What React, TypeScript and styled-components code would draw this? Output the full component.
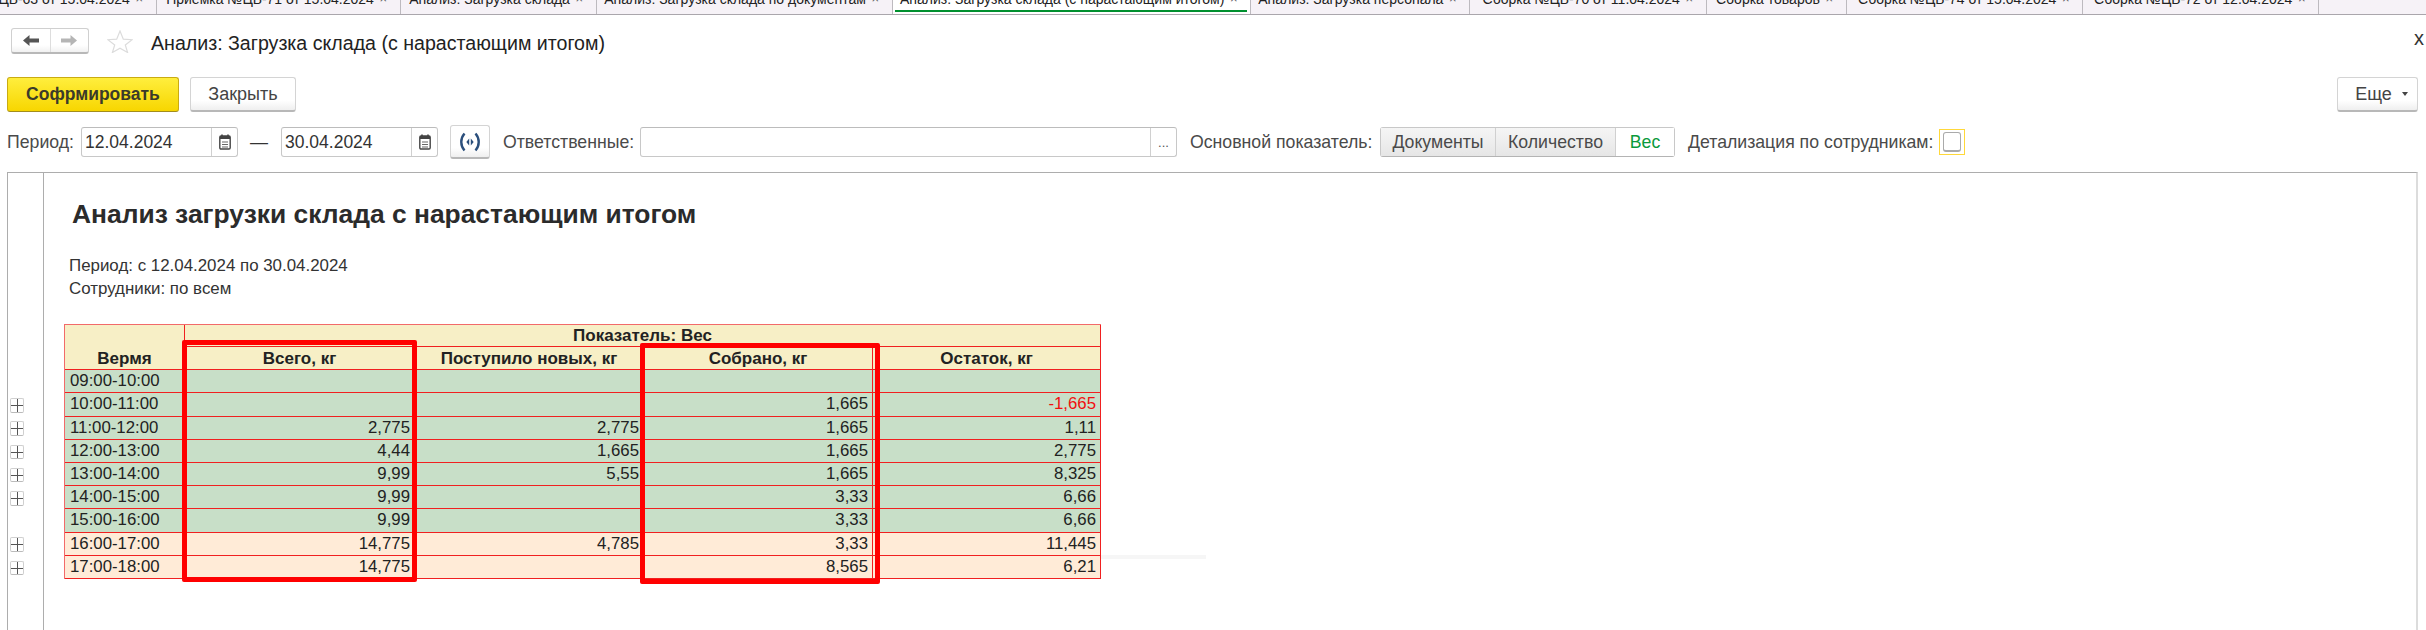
import React from "react";
import styled, { createGlobalStyle } from "styled-components";

const tabs = [
  { label: "Приемка №ЦБ-63 от 15.04.2024", width: 156.5 },
  { label: "Приемка №ЦБ-71 от 15.04.2024", width: 244 },
  { label: "Анализ: Загрузка склада", width: 196 },
  { label: "Анализ: Загрузка склада по документам", width: 296 },
  { label: "Анализ: Загрузка склада (с нарастающим итогом)", width: 358.5, active: true },
  { label: "Анализ: Загрузка персонала", width: 219 },
  { label: "Сборка №ЦБ-70 от 11.04.2024", width: 236.5 },
  { label: "Сборка товаров", width: 140 },
  { label: "Сборка №ЦБ-74 от 15.04.2024", width: 236.5 },
  { label: "Сборка №ЦБ-72 от 12.04.2024", width: 236 },
];

const rows = [
  { time: "09:00-10:00", total: "", added: "", picked: "", rest: "" },
  { time: "10:00-11:00", total: "", added: "", picked: "1,665", rest: "-1,665", negative: true, expand: true },
  { time: "11:00-12:00", total: "2,775", added: "2,775", picked: "1,665", rest: "1,11", expand: true },
  { time: "12:00-13:00", total: "4,44", added: "1,665", picked: "1,665", rest: "2,775", expand: true },
  { time: "13:00-14:00", total: "9,99", added: "5,55", picked: "1,665", rest: "8,325", expand: true },
  { time: "14:00-15:00", total: "9,99", added: "", picked: "3,33", rest: "6,66", expand: true },
  { time: "15:00-16:00", total: "9,99", added: "", picked: "3,33", rest: "6,66" },
  { time: "16:00-17:00", total: "14,775", added: "4,785", picked: "3,33", rest: "11,445", peach: true, expand: true },
  { time: "17:00-18:00", total: "14,775", added: "", picked: "8,565", rest: "6,21", peach: true, expand: true },
];

const CalendarIcon = () => (
  <svg width="12" height="16" viewBox="0 0 12 16">
    <path d="M3 0.5v2.5M9 0.5v2.5" stroke="#444" strokeWidth="1.6" />
    <rect x="0.8" y="2" width="10.4" height="13" rx="1.2" fill="none" stroke="#444" strokeWidth="1.4" />
    <rect x="1" y="2" width="10" height="3" fill="#444" />
    <path d="M3 8h6M3 10.5h6M3 13h6" stroke="#666" strokeWidth="1.1" />
  </svg>
);

const ArrowIcon = ({ flip, color }: { flip?: boolean; color: string }) => (
  <svg width="16" height="11" viewBox="0 0 16 11" style={flip ? { transform: "scaleX(-1)" } : undefined}>
    <path d="M0 5.5 6.5 0v3.5H16v4H6.5V11z" fill={color} />
  </svg>
);

const StarIcon = () => (
  <svg width="26" height="23" viewBox="0 0 26 23">
    <path d="M13 1l3.3 8.2 8.9.5-6.9 5.3 2.3 7.5L13 18.2l-7.6 4.3 2.3-7.5L.8 9.7l8.9-.5z" fill="#fff" stroke="#dcdcdc" strokeWidth="1.2" />
  </svg>
);

const SignalIcon = () => (
  <svg width="24" height="20" viewBox="0 0 24 20">
    <path d="M6.5 1.5C2.2 6.5 2.2 13.5 6.5 18.5M17.5 1.5C21.8 6.5 21.8 13.5 17.5 18.5" fill="none" stroke="#2b4f7c" strokeWidth="2.4" />
    <path d="M11.2 6.5v7L8.3 10zM12.8 6.5v7L15.7 10z" fill="#2b4f7c" />
  </svg>
);

export default function App() {
  return (
    <Page>
      <GlobalStyle />
      <TabBar>
        {tabs.map((tab) => (
          <Tab key={tab.label} $width={tab.width} $active={tab.active}>
            <TabLabel>{tab.label}</TabLabel>
            <TabClose>×</TabClose>
          </Tab>
        ))}
      </TabBar>

      <TitleRow>
        <NavGroup>
          <NavButton><ArrowIcon color="#555" /></NavButton>
          <NavButton><ArrowIcon flip color="#b5b5b5" /></NavButton>
        </NavGroup>
        <StarBox><StarIcon /></StarBox>
        <Title>Анализ: Загрузка склада (с нарастающим итогом)</Title>
        <CloseMark>x</CloseMark>
      </TitleRow>

      <ActionRow>
        <PrimaryButton>Софрмировать</PrimaryButton>
        <PlainButton $width={106}>Закрыть</PlainButton>
        <MoreButton $width={81}>
          Еще
          <Caret />
        </MoreButton>
      </ActionRow>

      <FilterRow>
        <Label $width={65}>Период:</Label>
        <Field $gap={9} $width={157}>
          <FieldText>12.04.2024</FieldText>
          <FieldAddon><CalendarIcon /></FieldAddon>
        </Field>
        <Dash>—</Dash>
        <Field $width={157}>
          <FieldText>30.04.2024</FieldText>
          <FieldAddon><CalendarIcon /></FieldAddon>
        </Field>
        <IconButton><SignalIcon /></IconButton>
        <Label $gap={13} $width={130}>Ответственные:</Label>
        <Field $gap={7} $width={537}>
          <FieldText />
          <FieldAddon>...</FieldAddon>
        </Field>
        <Label $gap={13} $width={182}>Основной показатель:</Label>
        <Segments>
          <Segment $width={114}>Документы</Segment>
          <Segment $width={120}>Количество</Segment>
          <Segment $width={59} $active>Вес</Segment>
        </Segments>
        <Label $gap={13} $width={246}>Детализация по сотрудникам:</Label>
        <CheckFrame><CheckBox /></CheckFrame>
      </FilterRow>

      <Report>
        <Gutter>
          {rows.map((row) => (
            <GutterSlot key={row.time}>{row.expand && <Expander />}</GutterSlot>
          ))}
        </Gutter>
        <Sheet>
          <Heading>Анализ загрузки склада с нарастающим итогом</Heading>
          <Meta>
            <div>Период: с 12.04.2024 по 30.04.2024</div>
            <div>Сотрудники: по всем</div>
          </Meta>
          <TableWrap>
            <Table>
              <HeadCell $rowSpan={2} $alignEnd>Вермя</HeadCell>
              <HeadCell $colSpan={4}>Показатель: Вес</HeadCell>
              <HeadCell>Всего, кг</HeadCell>
              <HeadCell>Поступило новых, кг</HeadCell>
              <HeadCell>Собрано, кг</HeadCell>
              <HeadCell>Остаток, кг</HeadCell>
              {rows.map((row) => (
                <React.Fragment key={row.time}>
                  <TimeCell $peach={row.peach}>{row.time}</TimeCell>
                  <NumCell $peach={row.peach}>{row.total}</NumCell>
                  <NumCell $peach={row.peach}>{row.added}</NumCell>
                  <NumCell $peach={row.peach}>{row.picked}</NumCell>
                  <NumCell $peach={row.peach} $negative={row.negative}>{row.rest}</NumCell>
                </React.Fragment>
              ))}
            </Table>
            <Highlight $left={117.5} $top={16} $width={235.5} $height={242} />
            <Highlight $left={576} $top={19} $width={240} $height={241} />
            <Streak />
          </TableWrap>
        </Sheet>
      </Report>
    </Page>
  );
}

const GlobalStyle = createGlobalStyle`
  html, body {
    margin: 0;
    background: #fff;
  }
  * {
    box-sizing: border-box;
  }
`;

const Page = styled.div`
  display: flex;
  flex-direction: column;
  width: 2426px;
  height: 630px;
  overflow: hidden;
  font-family: "Liberation Sans", Arial, sans-serif;
  color: #333;
`;

const TabBar = styled.div`
  display: flex;
  flex: none;
  height: 15px;
  background: #f6f2f7;
  border-bottom: 1px solid #aaa6ac;
`;

const Tab = styled.div<{ $width: number; $active?: boolean }>`
  position: relative;
  display: flex;
  flex: none;
  align-items: flex-end;
  justify-content: flex-end;
  gap: 5.5px;
  width: ${(p) => p.$width}px;
  padding: 0 12.5px 8.5px 0;
  overflow: hidden;
  font-size: 14px;
  line-height: 14px;
  white-space: nowrap;
  color: #222;
  background: ${(p) => (p.$active ? "#fff" : "transparent")};
  border-right: 1px solid #bdbabf;

  &::after {
    content: "";
    display: ${(p) => (p.$active ? "block" : "none")};
    position: absolute;
    left: 2px;
    right: 3px;
    bottom: 2px;
    height: 2px;
    background: #00902f;
  }
`;

const TabLabel = styled.span``;

const TabClose = styled.span`
  font-size: 13px;
  color: #555;
`;

const TitleRow = styled.div`
  display: flex;
  flex: none;
  align-items: center;
  height: 26px;
  margin-top: 13px;
  padding-left: 11px;
`;

const NavGroup = styled.div`
  display: flex;
  width: 78px;
  height: 26px;
  background: linear-gradient(#fff 70%, #f1f1f1);
  border: 1px solid #d0d0d0;
  border-bottom: 2px solid #b8b8b8;
  border-radius: 3px;
`;

const NavButton = styled.div`
  display: flex;
  flex: 1;
  align-items: center;
  justify-content: center;

  & + & {
    border-left: 1px solid #ddd;
  }
`;

const StarBox = styled.div`
  display: flex;
  margin-left: 18px;
`;

const Title = styled.div`
  margin: 4px 0 0 18px;
  font-size: 19.6px;
  color: #222;
`;

const CloseMark = styled.div`
  margin-left: auto;
  margin-right: 2px;
  margin-bottom: 5px;
  font-size: 20px;
  color: #333;
`;

const ActionRow = styled.div`
  display: flex;
  flex: none;
  gap: 11px;
  height: 35px;
  margin-top: 23px;
  padding: 0 8px 0 7px;
`;

const PrimaryButton = styled.div`
  display: flex;
  align-items: center;
  justify-content: center;
  width: 172px;
  font-size: 17.5px;
  font-weight: 700;
  color: #3b3b2a;
  background: linear-gradient(#ffee3d, #f7d600);
  border: 1px solid #c9ab12;
  border-bottom-color: #a38d1c;
  border-radius: 3px;
`;

const PlainButton = styled.div<{ $width: number }>`
  display: flex;
  align-items: center;
  justify-content: center;
  width: ${(p) => p.$width}px;
  font-size: 18px;
  color: #444;
  background: linear-gradient(#fff 70%, #efefef);
  border: 1px solid #d4d4d4;
  border-bottom: 2px solid #b8b8b8;
  border-radius: 3px;
`;

const MoreButton = styled(PlainButton)`
  gap: 10px;
  margin-left: auto;
  padding-left: 8px;
`;

const Caret = styled.span`
  width: 0;
  height: 0;
  border-left: 3px solid transparent;
  border-right: 3px solid transparent;
  border-top: 4px solid #444;
`;

const FilterRow = styled.div`
  display: flex;
  flex: none;
  align-items: center;
  height: 34px;
  margin-top: 13px;
  padding-left: 7px;
`;

const Label = styled.span<{ $gap?: number; $width: number }>`
  flex: none;
  width: ${(p) => p.$width}px;
  margin-left: ${(p) => p.$gap ?? 0}px;
  font-size: 17.7px;
  white-space: nowrap;
  color: #4a4a4a;
`;

const Field = styled.div<{ $gap?: number; $width: number }>`
  display: flex;
  flex: none;
  width: ${(p) => p.$width}px;
  height: 30px;
  margin-left: ${(p) => p.$gap ?? 0}px;
  background: #fff;
  border: 1px solid #c8c8c8;
  border-top-color: #bcbcbc;
  border-radius: 3px;
`;

const FieldText = styled.div`
  flex: 1;
  padding-left: 3px;
  font-size: 17.5px;
  line-height: 28px;
  color: #333;
`;

const FieldAddon = styled.div`
  display: flex;
  align-items: center;
  justify-content: center;
  flex: none;
  width: 26px;
  font-size: 13px;
  color: #555;
  border-left: 1px solid #d0d0d0;
`;

const Dash = styled.span`
  width: 18px;
  margin: 0 13px 0 12px;
  font-size: 18px;
  color: #333;
`;

const IconButton = styled.div`
  display: flex;
  align-items: center;
  justify-content: center;
  flex: none;
  width: 40px;
  height: 34px;
  margin-left: 12px;
  background: linear-gradient(#fff 70%, #efefef);
  border: 1px solid #d4d4d4;
  border-bottom: 2px solid #b8b8b8;
  border-radius: 3px;
`;

const Segments = styled.div`
  display: flex;
  flex: none;
  height: 30px;
  margin-left: 8px;
  border: 1px solid #c8c8c8;
  border-bottom-color: #b4b4b4;
  border-radius: 3px;
`;

const Segment = styled.div<{ $width: number; $active?: boolean }>`
  display: flex;
  align-items: center;
  justify-content: center;
  width: ${(p) => p.$width}px;
  font-size: 17.7px;
  color: ${(p) => (p.$active ? "#0a9a3c" : "#4a4a4a")};
  background: ${(p) => (p.$active ? "#fff" : "linear-gradient(#f5f5f5, #e6e6e6)")};

  & + & {
    border-left: 1px solid #d0d0d0;
  }
`;

const CheckFrame = styled.div`
  display: flex;
  align-items: center;
  justify-content: center;
  flex: none;
  width: 26px;
  height: 26px;
  margin-left: 5px;
  border: 1px solid #ffd83a;
`;

const CheckBox = styled.div`
  width: 18px;
  height: 20px;
  background: #fff;
  border: 1px solid #aaa;
  border-bottom-width: 2px;
  border-radius: 3px;
`;

const Report = styled.div`
  display: flex;
  flex: 1;
  margin: 13px 8px 0 7px;
  border-top: 1px solid #adadad;
  border-left: 1px solid #adadad;
  border-right: 2px solid #dcdcdc;
`;

const Gutter = styled.div`
  display: flex;
  flex: none;
  flex-direction: column;
  width: 36px;
  padding: 197px 0 0 2px;
  border-right: 1px solid #adadad;
`;

const GutterSlot = styled.div`
  display: flex;
  align-items: center;
  flex: none;
  height: 23.2px;
  padding-top: 1.5px;
`;

const Expander = styled.div`
  position: relative;
  width: 14px;
  height: 14.5px;
  background: #fff;
  border: 1px solid #d0d0d0;
  border-bottom-color: #bbb;
  border-radius: 2px;

  &::before,
  &::after {
    content: "";
    position: absolute;
    background: #555;
  }

  &::before {
    left: 0;
    right: 0;
    top: 6px;
    height: 1px;
  }

  &::after {
    top: 0;
    bottom: 0;
    left: 5.5px;
    width: 1px;
  }
`;

const Sheet = styled.div`
  flex: 1;
  padding-left: 20px;
`;

const Heading = styled.h1`
  margin: 26px 0 0 8px;
  font-size: 26.4px;
  line-height: 30px;
  font-weight: 700;
  color: #2b2b2b;
`;

const Meta = styled.div`
  margin: 24.5px 0 0 5px;
  font-size: 16.9px;
  line-height: 23px;
  color: #333;
`;

const TableWrap = styled.div`
  position: relative;
  width: 1037px;
  margin-top: 24.5px;
`;

const Table = styled.div`
  display: grid;
  grid-template-columns: 120px 230px 229px 229px 1fr;
  grid-template-rows: 22px 23.3px repeat(9, 23.2px);
  font-size: 16.8px;
  color: #222;
  border-top: 1px solid #f26a6a;
  border-left: 1px solid #f26a6a;
`;

const Cell = styled.div`
  border-right: 1px solid #f02020;
  border-bottom: 1px solid #f02020;
  line-height: 21px;
  white-space: nowrap;
`;

const HeadCell = styled(Cell)<{ $rowSpan?: number; $colSpan?: number; $alignEnd?: boolean }>`
  display: flex;
  align-items: ${(p) => (p.$alignEnd ? "flex-end" : "center")};
  justify-content: center;
  grid-row: span ${(p) => p.$rowSpan ?? 1};
  grid-column: span ${(p) => p.$colSpan ?? 1};
  font-size: 17px;
  font-weight: 700;
  background: #f7efc6;
`;

const TimeCell = styled(Cell)<{ $peach?: boolean }>`
  padding-left: 5px;
  background: ${(p) => (p.$peach ? "#ffebd7" : "#c8dfc8")};
`;

const NumCell = styled(Cell)<{ $peach?: boolean; $negative?: boolean }>`
  padding-right: 4px;
  text-align: right;
  color: ${(p) => (p.$negative ? "#f01010" : "inherit")};
  background: ${(p) => (p.$peach ? "#ffebd7" : "#c8dfc8")};
`;

const Highlight = styled.div<{ $left: number; $top: number; $width: number; $height: number }>`
  position: absolute;
  left: ${(p) => p.$left}px;
  top: ${(p) => p.$top}px;
  width: ${(p) => p.$width}px;
  height: ${(p) => p.$height}px;
  border: 5px solid #ff0000;
  border-radius: 2px;
`;

const Streak = styled.div`
  position: absolute;
  left: 1037px;
  top: 231px;
  width: 105px;
  height: 4px;
  background: #f6f6f6;
`;
